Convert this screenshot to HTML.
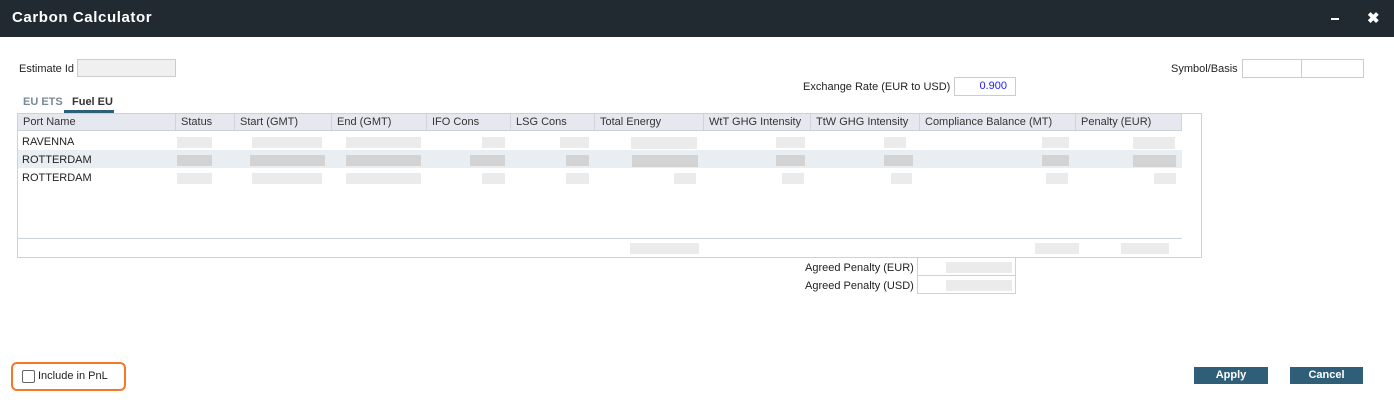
<!DOCTYPE html>
<html><head><style>
*{margin:0;padding:0;box-sizing:border-box}
body{width:1394px;height:408px;background:#fff;font-family:"Liberation Sans",Arial,sans-serif;font-size:11px;color:#222;position:relative;overflow:hidden}
.a{position:absolute}
.hdr{left:0;top:0;width:1394px;height:37px;background:#222a31}
.p{position:absolute;height:11px;background:#ebebeb}
.d{background:#d3d3d3}
.th{position:absolute;top:114px;height:17px;line-height:17px;padding-left:5px;border-right:1px solid #d0d4dc;color:#333}
</style></head><body>
<div class="a hdr"></div>
<div class="a" style="left:12px;top:9px;color:#fff;font-weight:bold;font-size:15px;letter-spacing:0.6px">Carbon Calculator</div>
<div class="a" style="left:1331px;top:18px;width:8px;height:2px;background:#fff"></div>
<div class="a" style="left:1367px;top:9px;color:#fff;font-weight:bold;font-size:15px">✖</div>

<div class="a" style="left:19px;top:63px">Estimate Id</div>
<div class="a" style="left:77px;top:59px;width:99px;height:18px;border:1px solid #ccc;background:#f0f0f0"></div>

<div class="a" style="left:1171px;top:63px">Symbol/Basis</div>
<div class="a" style="left:1242px;top:59px;width:122px;height:19px;border:1px solid #ccc"></div>
<div class="a" style="left:1301px;top:59px;width:1px;height:19px;background:#ccc"></div>

<div class="a" style="left:803px;top:81px">Exchange Rate (EUR to USD)</div>
<div class="a" style="left:954px;top:77px;width:62px;height:19px;border:1px solid #ccc;color:#1a1aff;text-align:right;padding-right:8px;line-height:17px">0.900</div>

<div class="a" style="left:23px;top:96px;color:#7a8a96;font-weight:bold">EU ETS</div>
<div class="a" style="left:72px;top:96px;color:#333;font-weight:bold">Fuel EU</div>
<div class="a" style="left:64px;top:110px;width:50px;height:3px;background:#2f5f78"></div>

<div class="a" style="left:17px;top:113px;width:1185px;height:145px;border:1px solid #ccd2da"></div>
<div class="a" style="left:18px;top:114px;width:1164px;height:17px;background:#e6e8f0;border-bottom:1px solid #cdd2da"></div>
<div class="th" style="left:18px;width:158px">Port Name</div>
<div class="th" style="left:176px;width:59px">Status</div>
<div class="th" style="left:235px;width:97px">Start (GMT)</div>
<div class="th" style="left:332px;width:95px">End (GMT)</div>
<div class="th" style="left:427px;width:84px">IFO Cons</div>
<div class="th" style="left:511px;width:84px">LSG Cons</div>
<div class="th" style="left:595px;width:109px">Total Energy</div>
<div class="th" style="left:704px;width:107px">WtT GHG Intensity</div>
<div class="th" style="left:811px;width:109px">TtW GHG Intensity</div>
<div class="th" style="left:920px;width:156px">Compliance Balance (MT)</div>
<div class="th" style="left:1076px;width:106px">Penalty (EUR)</div>

<div class="a" style="left:18px;top:150px;width:1164px;height:18px;background:#e8eef2"></div>
<div class="a" style="left:22px;top:136px">RAVENNA</div>
<div class="a" style="left:22px;top:154px">ROTTERDAM</div>
<div class="a" style="left:22px;top:172px">ROTTERDAM</div>

<div class="p" style="top:137px;left:177px;width:35px"></div>
<div class="p" style="top:137px;left:252px;width:70px"></div>
<div class="p" style="top:137px;left:346px;width:75px"></div>
<div class="p" style="top:137px;left:482px;width:23px"></div>
<div class="p" style="top:137px;left:560px;width:29px"></div>
<div class="p" style="top:137px;left:631px;width:66px;height:12px"></div>
<div class="p" style="top:137px;left:776px;width:29px"></div>
<div class="p" style="top:137px;left:884px;width:22px"></div>
<div class="p" style="top:137px;left:1042px;width:27px"></div>
<div class="p" style="top:137px;left:1133px;width:42px;height:12px"></div>

<div class="p d" style="top:155px;left:177px;width:35px"></div>
<div class="p d" style="top:155px;left:250px;width:75px"></div>
<div class="p d" style="top:155px;left:346px;width:75px"></div>
<div class="p d" style="top:155px;left:470px;width:35px"></div>
<div class="p d" style="top:155px;left:566px;width:23px"></div>
<div class="p d" style="top:155px;left:632px;width:66px;height:12px"></div>
<div class="p d" style="top:155px;left:776px;width:29px"></div>
<div class="p d" style="top:155px;left:884px;width:29px"></div>
<div class="p d" style="top:155px;left:1042px;width:27px"></div>
<div class="p d" style="top:155px;left:1133px;width:43px;height:12px"></div>

<div class="p" style="top:173px;left:177px;width:35px"></div>
<div class="p" style="top:173px;left:252px;width:70px"></div>
<div class="p" style="top:173px;left:346px;width:75px"></div>
<div class="p" style="top:173px;left:482px;width:23px"></div>
<div class="p" style="top:173px;left:566px;width:23px"></div>
<div class="p" style="top:173px;left:674px;width:22px"></div>
<div class="p" style="top:173px;left:782px;width:22px"></div>
<div class="p" style="top:173px;left:891px;width:21px"></div>
<div class="p" style="top:173px;left:1046px;width:22px"></div>
<div class="p" style="top:173px;left:1154px;width:22px"></div>

<div class="a" style="left:18px;top:238px;width:1164px;height:1px;background:#ccd2da"></div>
<div class="p" style="top:243px;left:630px;width:69px;height:11px"></div>
<div class="p" style="top:243px;left:1035px;width:44px"></div>
<div class="p" style="top:243px;left:1121px;width:48px"></div>

<div class="a" style="left:805px;top:262px">Agreed Penalty (EUR)</div>
<div class="a" style="left:805px;top:280px">Agreed Penalty (USD)</div>
<div class="a" style="left:917px;top:257px;width:99px;height:37px;border:1px solid #ccd2da"></div>
<div class="a" style="left:917px;top:275px;width:99px;height:1px;background:#ccd2da"></div>
<div class="p" style="top:262px;left:946px;width:66px"></div>
<div class="p" style="top:280px;left:946px;width:66px"></div>

<div class="a" style="left:11px;top:362px;width:115px;height:29px;border:2px solid #f5782a;border-radius:6px"></div>
<div class="a" style="left:22px;top:370px;width:13px;height:13px;border:1px solid #666;border-radius:2px"></div>
<div class="a" style="left:38px;top:370px">Include in PnL</div>

<div class="a" style="left:1194px;top:367px;width:74px;height:17px;background:#2f5f78;color:#fff;font-weight:bold;text-align:center;line-height:17px">Apply</div>
<div class="a" style="left:1290px;top:367px;width:73px;height:17px;background:#2f5f78;color:#fff;font-weight:bold;text-align:center;line-height:17px">Cancel</div>
</body></html>
